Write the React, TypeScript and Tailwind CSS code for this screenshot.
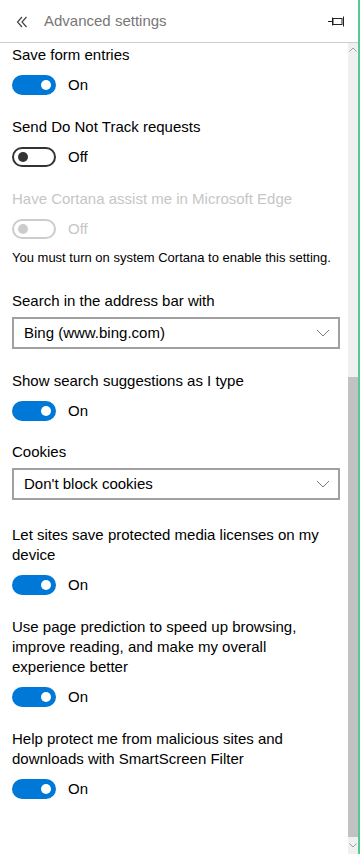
import React from 'react';

const font = { fontFamily: '"Liberation Sans", Arial, sans-serif' };

function Toggle({ on, disabled }: { on: boolean; disabled?: boolean }) {
    if (on) {
        return (
            <div className="w-[44px] h-[20px] rounded-full bg-[#0078d7] flex items-center justify-end pr-[5px] shrink-0">
                <div className="w-[10px] h-[10px] rounded-full bg-white" />
            </div>
        );
    }
    return (
        <div className={`w-[44px] h-[20px] rounded-full border-2 flex items-center pl-[4px] shrink-0 ${disabled ? 'border-[#cccccc]' : 'border-[#333333]'}`}>
            <div className={`w-[10px] h-[10px] rounded-full ${disabled ? 'bg-[#cccccc]' : 'bg-[#333333]'}`} />
        </div>
    );
}

function ToggleSetting({ label, on, disabled, className = '' }: { label: React.ReactNode; on: boolean; disabled?: boolean; className?: string }) {
    return (
        <div className={className}>
            <p className={`text-[15px] leading-[20px] ${disabled ? 'text-[#c6c6c6]' : 'text-black'}`}>{label}</p>
            <div className="flex items-center gap-3 mt-[10px]">
                <Toggle on={on} disabled={disabled} />
                <span className={`text-[15px] leading-[20px] ${disabled ? 'text-[#c6c6c6]' : 'text-black'}`}>{on ? 'On' : 'Off'}</span>
            </div>
        </div>
    );
}

function Select({ value }: { value: string }) {
    return (
        <div className="mt-[6px] mr-[8px] h-[32px] border-2 border-[#a0a0a0] flex items-center justify-between pl-[10px] pr-[8px]">
            <span className="text-[15px] text-black">{value}</span>
            <svg width="14" height="8" viewBox="0 0 14 8" className="shrink-0">
                <polyline points="1,1 7,7 13,1" fill="none" stroke="#7a7a7a" strokeWidth="1" />
            </svg>
        </div>
    );
}

export default function App() {
    return (
        <div className="w-[360px] h-[854px] bg-white flex overflow-hidden" style={font}>
            <div className="flex-1 flex flex-col min-w-0">
                <div className="h-[43px] border-b border-[#cccccc] flex items-center shrink-0">
                    <svg width="12" height="12" viewBox="0 0 12 12" className="ml-[16px] mt-[1px]">
                        <polyline points="6,1 1.5,6 6,11" fill="none" stroke="#444" strokeWidth="1.2" />
                        <polyline points="10.5,1 6,6 10.5,11" fill="none" stroke="#444" strokeWidth="1.2" />
                    </svg>
                    <span className="ml-[16px] text-[15px] text-[#777777]">Advanced settings</span>
                    <svg width="18" height="11" viewBox="0 0 18 11" className="ml-auto mr-[12px]">
                        <line x1="0" y1="5.5" x2="4" y2="5.5" stroke="#222" strokeWidth="1" />
                        <line x1="4.5" y1="1.5" x2="4.5" y2="9.5" stroke="#222" strokeWidth="1" />
                        <rect x="5" y="2.5" width="9" height="6" fill="none" stroke="#222" strokeWidth="1" />
                        <line x1="15.5" y1="0.5" x2="15.5" y2="10.5" stroke="#222" strokeWidth="1" />
                    </svg>
                </div>
                <div className="flex-1 flex min-h-0">
                    <div className="flex-1 pl-[12px] pt-[2px] min-w-0">
                        <ToggleSetting label="Save form entries" on />
                        <ToggleSetting label="Send Do Not Track requests" on={false} className="mt-[22px]" />
                        <ToggleSetting label="Have Cortana assist me in Microsoft Edge" on={false} disabled className="mt-[22px]" />
                        <p className="text-[13px] leading-[16px] text-black mt-[11px]">You must turn on system Cortana to enable this setting.</p>

                        <p className="text-[15px] leading-[20px] text-black mt-[25px]">Search in the address bar with</p>
                        <Select value="Bing (www.bing.com)" />

                        <ToggleSetting label="Show search suggestions as I type" on className="mt-[22px]" />

                        <p className="text-[15px] leading-[20px] text-black mt-[21px]">Cookies</p>
                        <Select value="Don't block cookies" />

                        <ToggleSetting label={<>Let sites save protected media licenses on my<br />device</>} on className="mt-[25px]" />
                        <ToggleSetting label={<>Use page prediction to speed up browsing,<br />improve reading, and make my overall<br />experience better</>} on className="mt-[22px]" />
                        <ToggleSetting label={<>Help protect me from malicious sites and<br />downloads with SmartScreen Filter</>} on className="mt-[22px]" />
                    </div>
                    <div className="w-[10px] bg-[#f0f0f0] flex flex-col items-center shrink-0">
                        <svg width="8" height="5" viewBox="0 0 8 5" className="mt-[4px]">
                            <polyline points="0.5,4.5 4,1 7.5,4.5" fill="none" stroke="#a0a0a0" strokeWidth="1" />
                        </svg>
                        <div className="mt-[325px] w-full h-[460px] bg-[#c2c2c2]" />
                        <svg width="8" height="5" viewBox="0 0 8 5" className="mt-[6px]">
                            <polyline points="0.5,0.5 4,4 7.5,0.5" fill="none" stroke="#a0a0a0" strokeWidth="1" />
                        </svg>
                    </div>
                </div>
            </div>
            <div className="w-[2px] bg-[#56c98f] shrink-0" />
        </div>
    );
}
